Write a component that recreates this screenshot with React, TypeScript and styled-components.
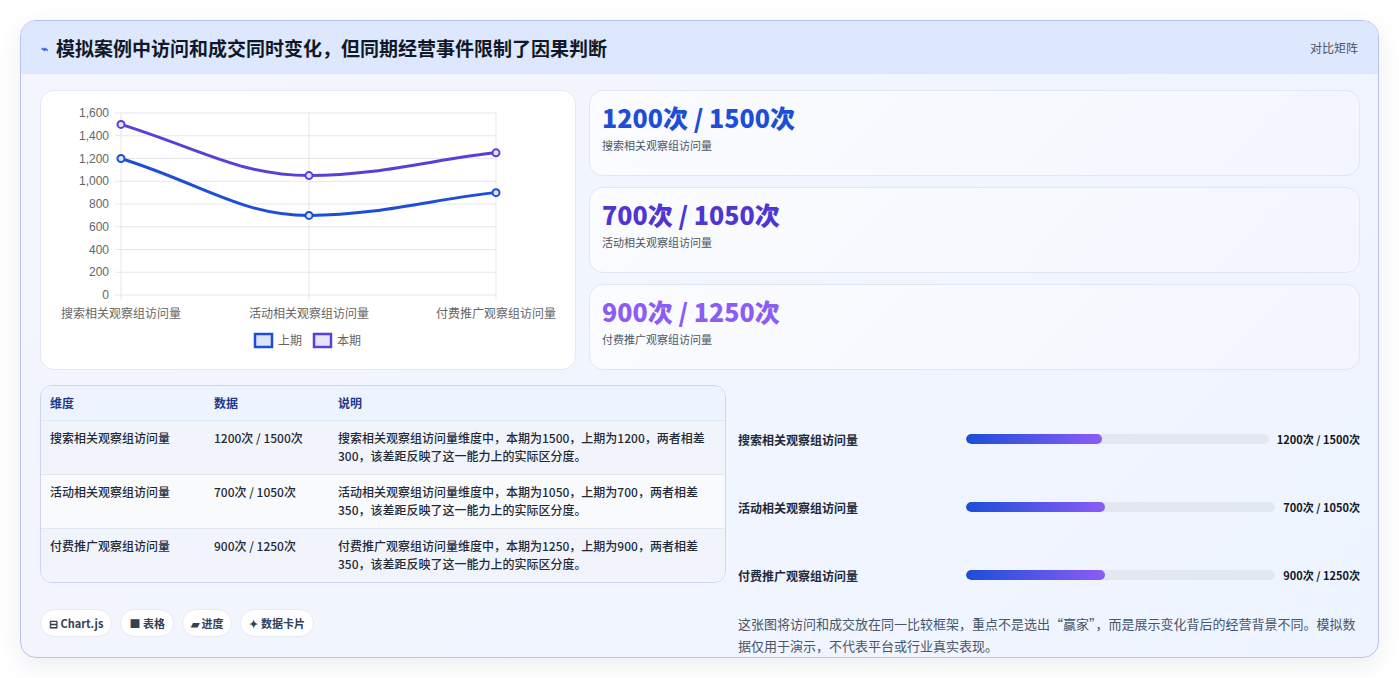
import React from "react";
import styled, { createGlobalStyle } from "styled-components";

const G = createGlobalStyle`
  body{margin:0;background:#fff;font-family:"Noto Sans CJK SC","Noto Sans",sans-serif;}
`;
const Frame = styled.div`padding:20px 20px 20px 20px;width:1399px;box-sizing:border-box;`;
const Card = styled.div`
  width:1359px;height:638px;box-sizing:border-box;border:1px solid #b9c3ef;border-radius:16px;overflow:hidden;
  background:linear-gradient(135deg,#f4f6fe,#eef4ff);box-shadow:0 8px 24px rgba(30,40,90,.08);
  display:flex;flex-direction:column;`;
const Header = styled.div`height:56px;background:#dde7fe;display:flex;align-items:center;justify-content:space-between;padding:0 20px;`;
const Title = styled.div`font-size:19px;font-weight:700;color:#111827;display:flex;align-items:center;gap:8px;`;
const Tag = styled.div`font-size:12px;color:#4b5563;`;
const Body = styled.div`padding:16px 19px 0 19px;display:flex;flex-direction:column;gap:15px;`;
const Top = styled.div`display:grid;grid-template-columns:536px 771px;gap:13px;`;
const ChartBox = styled.div`background:#fff;border:1px solid #e3e8f5;border-radius:14px;height:280px;box-sizing:border-box;`;
const Stats = styled.div`display:flex;flex-direction:column;gap:11px;`;
const Stat = styled.div`height:86px;box-sizing:border-box;border:1px solid #e0e6f5;border-radius:14px;background:linear-gradient(135deg,#fbfcff,#f3f6fe);padding:8px 12px;`;
const Big = styled.div<{c:string}>`font-size:25px;font-weight:800;color:${p=>p.c};line-height:36px;`;
const Small = styled.div`font-size:11px;color:#4b5563;margin-top:2px;`;
const Bottom = styled.div`display:grid;grid-template-columns:686px 622px;gap:12px;`;
const Left = styled.div`display:flex;flex-direction:column;gap:26px;`;
const Table = styled.div`border:1px solid #cdd5e8;border-radius:12px;overflow:hidden;background:#f8fafc;`;
const Row = styled.div<{h?:boolean;alt?:boolean}>`display:grid;grid-template-columns:164px 124px 1fr;padding:${p=>p.h?"8px 9px":"8px 9px"};
  font-size:12px;line-height:18px;color:${p=>p.h?"#1e3a8a":"#1f2937"};font-weight:${p=>p.h?700:500};
  background:${p=>p.h?"#eef4ff":p.alt?"#f8fafc":"#f1f5fb"};border-top:${p=>p.h?"none":"1px solid #e2e8f0"};
  min-height:${p=>p.h?"16px":"37px"};`;
const Chips = styled.div`display:flex;gap:8px;`;
const Chip = styled.div`font-size:11px;font-weight:700;color:#334155;background:#fff;border:1px solid #e5e9f2;border-radius:14px;padding:5px 8px;`;
const Right = styled.div`display:flex;flex-direction:column;padding-top:20px;`;
const BarRow = styled.div`display:grid;grid-template-columns:220px 1fr auto;align-items:center;height:68px;gap:8px;font-size:12px;font-weight:600;color:#1f2937;`;
const Track = styled.div`height:10px;background:#e2e8f0;border-radius:5px;overflow:hidden;`;
const Fill = styled.div`height:100%;border-radius:5px;background:linear-gradient(90deg,#1d4ed8,#8b5cf6);`;
const Val = styled.div`font-size:11px;font-weight:700;color:#111827;`;
const Note = styled.div`font-size:13px;line-height:22px;color:#475569;margin-top:4px;`;

const cats=["搜索相关观察组访问量","活动相关观察组访问量","付费推广观察组访问量"];
const xs=[120,308,495];
const y=(v:number)=>297-v/1600*182;
function Chart(){
  const prev=[1200,700,900],cur=[1500,1050,1250];
  const path=(d:number[])=>`M${xs[0]},${y(d[0])} C200,${y(d[0])+25} 240,${y(d[1])} ${xs[1]},${y(d[1])} C380,${y(d[1])} 440,${y(d[2])+5} ${xs[2]},${y(d[2])}`;
  return <svg width="536" height="280" viewBox="40 93 536 280">
    {[0,200,400,600,800,1000,1200,1400,1600].map(v=><g key={v}>
      <line x1={114} x2={495} y1={y(v)} y2={y(v)} stroke="#e5e7eb"/>
      <text x={108} y={y(v)+4} fontSize="12" textAnchor="end" fill="#666" fontFamily="Liberation Sans">{v.toLocaleString("en-US")}</text></g>)}
    {xs.map((x,i)=><g key={x}><line x1={x} x2={x} y1={115} y2={302} stroke="#e5e7eb"/>
      <text x={x} y={320} fontSize="12" textAnchor="middle" fill="#666">{cats[i]}</text></g>)}
    <path d={path(prev)} fill="none" stroke="#1d4ed8" strokeWidth="3"/>
    <path d={path(cur)} fill="none" stroke="#5b3fd6" strokeWidth="3"/>
    {prev.map((v,i)=><circle key={"p"+i} cx={xs[i]} cy={y(v)} r="3.5" fill="#dbe4fb" stroke="#1d4ed8" strokeWidth="2"/>)}
    {cur.map((v,i)=><circle key={"c"+i} cx={xs[i]} cy={y(v)} r="3.5" fill="#e6e3fb" stroke="#5b3fd6" strokeWidth="2"/>)}
    <rect x={254} y={336} width={17} height={13} fill="#dbe4fb" stroke="#1d4ed8" strokeWidth="2.5"/>
    <text x={277} y={347} fontSize="12" fill="#666">上期</text>
    <rect x={313} y={336} width={17} height={13} fill="#e6e3fb" stroke="#5b3fd6" strokeWidth="2.5"/>
    <text x={336} y={347} fontSize="12" fill="#666">本期</text>
  </svg>;
}
const rows=[["搜索相关观察组访问量","1200次 / 1500次","搜索相关观察组访问量维度中，本期为1500，上期为1200，两者相差300，该差距反映了这一能力上的实际区分度。"],
["活动相关观察组访问量","700次 / 1050次","活动相关观察组访问量维度中，本期为1050，上期为700，两者相差350，该差距反映了这一能力上的实际区分度。"],
["付费推广观察组访问量","900次 / 1250次","付费推广观察组访问量维度中，本期为1250，上期为900，两者相差350，该差距反映了这一能力上的实际区分度。"]];
const colors=["#1d4ed8","#4f35d2","#8b5cf6"];
export default function App(){
  return <Frame><G/><Card>
    <Header><Title><span style={{fontSize:12,color:"#2563eb"}}>⌁</span>模拟案例中访问和成交同时变化，但同期经营事件限制了因果判断</Title><Tag>对比矩阵</Tag></Header>
    <Body>
      <Top><ChartBox><Chart/></ChartBox>
        <Stats>{rows.map((r,i)=><Stat key={i}><Big c={colors[i]}>{r[1]}</Big><Small>{r[0]}</Small></Stat>)}</Stats>
      </Top>
      <Bottom>
        <Left>
          <Table><Row h><span>维度</span><span>数据</span><span>说明</span></Row>
            {rows.map((r,i)=><Row key={i} alt={i===1}><span>{r[0]}</span><span>{r[1]}</span><span>{r[2]}</span></Row>)}
          </Table>
          <Chips><Chip>⊟ Chart.js</Chip><Chip>■ 表格</Chip><Chip>▰ 进度</Chip><Chip>✦ 数据卡片</Chip></Chips>
        </Left>
        <Right>
          {rows.map((r,i)=><BarRow key={i}><span>{r[0]}</span><Track><Fill style={{width:"45%"}}/></Track><Val>{r[1]}</Val></BarRow>)}
          <Note>这张图将访问和成交放在同一比较框架，重点不是选出“赢家”，而是展示变化背后的经营背景不同。模拟数据仅用于演示，不代表平台或行业真实表现。</Note>
        </Right>
      </Bottom>
    </Body>
  </Card></Frame>;
}
